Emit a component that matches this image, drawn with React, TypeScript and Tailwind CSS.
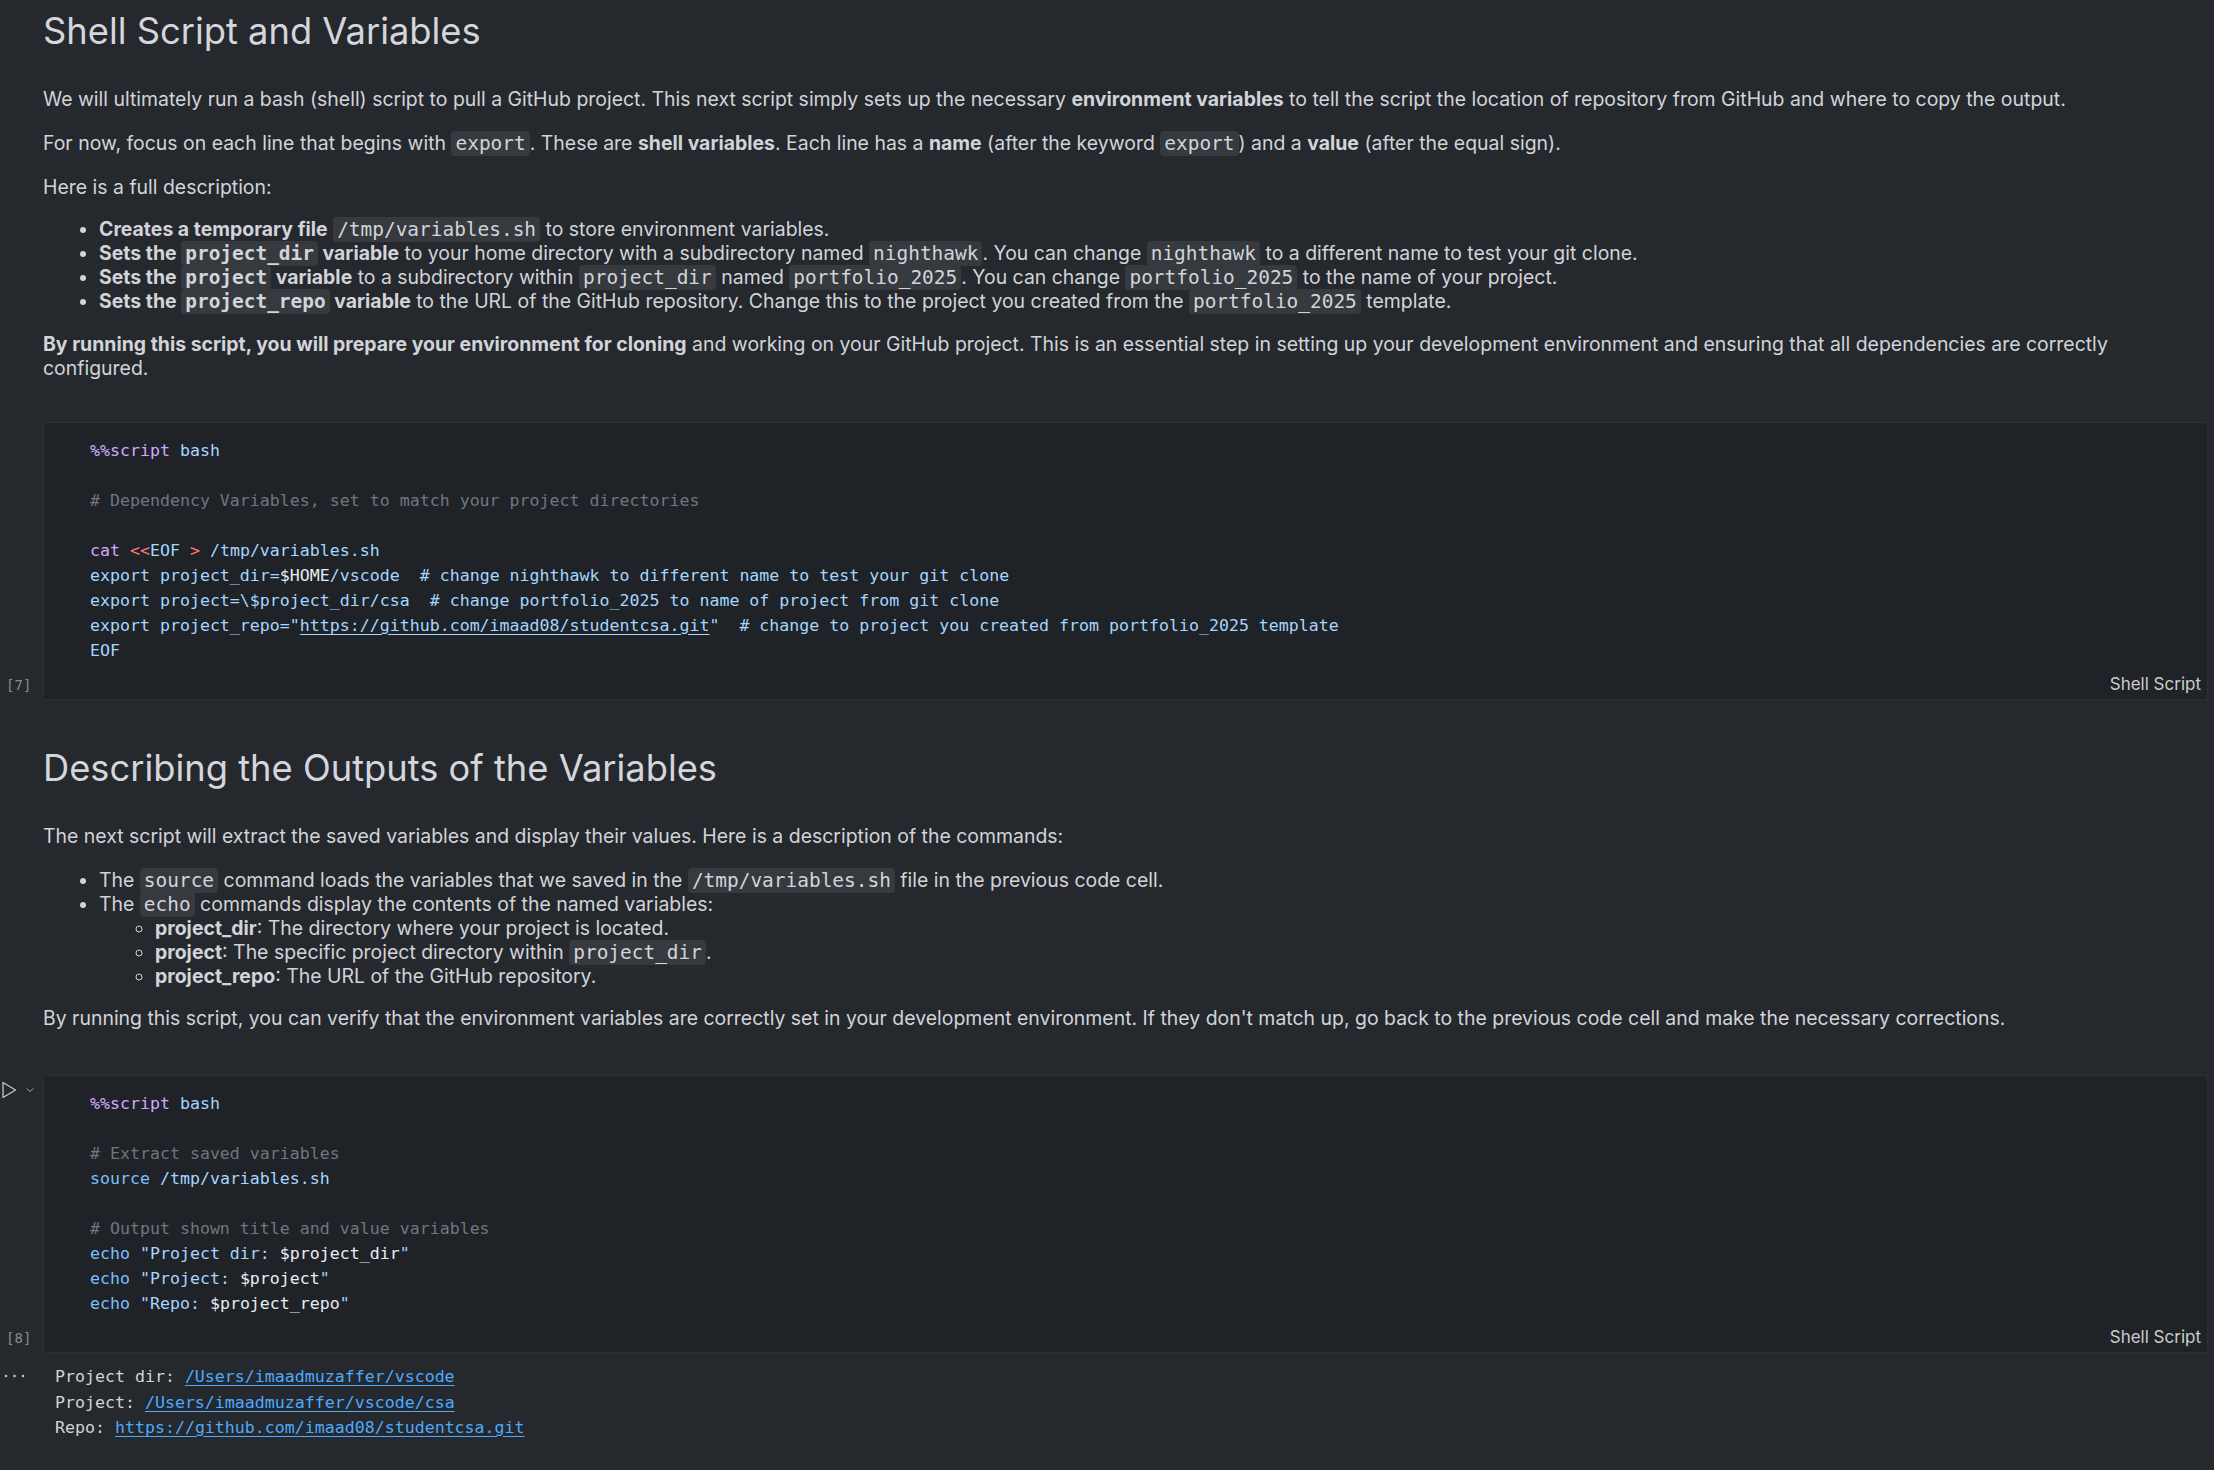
import React from "react";

const C = ({ children }: { children: React.ReactNode }) => (
  <code className="font-['DejaVu_Sans_Mono',monospace] text-[1em] leading-[16px] bg-[#363a3f] rounded-[4px] px-[4px] py-[1px]">
    {children}
  </code>
);

type Tok = [string, string];

const cell1: Tok[][] = [
  [["%%script", "text-[#d2a8ff]"], [" bash", "text-[#a5d6ff]"]],
  [],
  [["# Dependency Variables, set to match your project directories", "text-[#6e7681]"]],
  [],
  [["cat ", "text-[#d2a8ff]"], ["<<", "text-[#ff7b72]"], ["EOF", "text-[#a5d6ff]"], [" > ", "text-[#ff7b72]"], ["/tmp/variables.sh", "text-[#a5d6ff]"]],
  [["export project_dir=", "text-[#a5d6ff]"], ["$HOME", "text-[#e6edf3]"], ["/vscode  # change nighthawk to different name to test your git clone", "text-[#a5d6ff]"]],
  [["export project=\\$project_dir/csa  # change portfolio_2025 to name of project from git clone", "text-[#a5d6ff]"]],
  [["export project_repo=\"", "text-[#a5d6ff]"], ["https://github.com/imaad08/studentcsa.git", "text-[#a5d6ff] underline underline-offset-[3px]"], ["\"  # change to project you created from portfolio_2025 template", "text-[#a5d6ff]"]],
  [["EOF", "text-[#a5d6ff]"]],
];

const cell2: Tok[][] = [
  [["%%script", "text-[#d2a8ff]"], [" bash", "text-[#a5d6ff]"]],
  [],
  [["# Extract saved variables", "text-[#6e7681]"]],
  [["source", "text-[#79c0ff]"], [" /tmp/variables.sh", "text-[#a5d6ff]"]],
  [],
  [["# Output shown title and value variables", "text-[#6e7681]"]],
  [["echo", "text-[#79c0ff]"], [" \"Project dir: ", "text-[#a5d6ff]"], ["$project_dir", "text-[#e6edf3]"], ["\"", "text-[#a5d6ff]"]],
  [["echo", "text-[#79c0ff]"], [" \"Project: ", "text-[#a5d6ff]"], ["$project", "text-[#e6edf3]"], ["\"", "text-[#a5d6ff]"]],
  [["echo", "text-[#79c0ff]"], [" \"Repo: ", "text-[#a5d6ff]"], ["$project_repo", "text-[#e6edf3]"], ["\"", "text-[#a5d6ff]"]],
];

const CodeCell = ({ n, lines, run }: { n: number; lines: Tok[][]; run?: boolean }) => (
  <div className="flex">
    <div className="w-[43px] shrink-0 flex flex-col justify-between">
      <div className="flex items-start pt-[6px] pl-[2px] gap-[8px]">
        {run && (
          <>
            <svg width="15" height="18" viewBox="0 0 15 18" className="text-[#c5c5c5]">
              <path d="M1 1.5 L13.5 9 L1 16.5 Z" fill="none" stroke="currentColor" strokeWidth="1.3" strokeLinejoin="round" />
            </svg>
            <svg width="10" height="10" viewBox="0 0 10 10" className="mt-[4px] text-[#a0a0a0]">
              <path d="M1.5 3.5 L5 6.5 L8.5 3.5" fill="none" stroke="currentColor" strokeWidth="1" />
            </svg>
          </>
        )}
      </div>
      <div className="h-[30px] flex items-center pl-[6px] font-['DejaVu_Sans_Mono',monospace] text-[14px] text-[#8b8b8b]">
        [{n}]
      </div>
    </div>
    <div className="flex-1 mr-[6px] bg-[#1f2226] border border-[#2b2f34]">
      <div className="pt-[15px] pb-[6px] pl-[46px] font-['DejaVu_Sans_Mono',monospace] text-[16.6px] leading-[25px] whitespace-pre">
        {lines.map((l, i) => (
          <div key={i} className="h-[25px]">
            {l.map(([t, c], j) => (
              <span key={j} className={c}>
                {t}
              </span>
            ))}
          </div>
        ))}
      </div>
      <div className="h-[30px] flex items-center justify-end pr-[6px] text-[17px] text-[#cccccc]">Shell Script</div>
    </div>
  </div>
);

export default function App() {
  return (
    <div className="min-h-screen w-full bg-[#25282d] text-[#d1d4d9] font-['Inter','Liberation_Sans',sans-serif] text-[19.45px] leading-[24px]">
      <div className="pl-[43px] pr-[30px]">
        <h1 className="pt-[8px] text-[36.3px] leading-[47px] font-normal text-[#d3d6db]">Shell Script and Variables</h1>
        <p className="mt-[32px]">
          We will ultimately run a bash (shell) script to pull a GitHub project. This next script simply sets up the necessary{" "}
          <b>environment variables</b> to tell the script the location of repository from GitHub and where to copy the output.
        </p>
        <p className="mt-[20px]">
          For now, focus on each line that begins with <C>export</C>. These are <b>shell variables</b>. Each line has a{" "}
          <b>name</b> (after the keyword <C>export</C>) and a <b>value</b> (after the equal sign).
        </p>
        <p className="mt-[20px]">Here is a full description:</p>
        <ul className="mt-[18px] list-disc pl-[56px]">
          <li>
            <b>Creates a temporary file</b> <C>/tmp/variables.sh</C> to store environment variables.
          </li>
          <li>
            <b>
              Sets the <C>project_dir</C> variable
            </b>{" "}
            to your home directory with a subdirectory named <C>nighthawk</C>. You can change <C>nighthawk</C> to a different
            name to test your git clone.
          </li>
          <li>
            <b>
              Sets the <C>project</C> variable
            </b>{" "}
            to a subdirectory within <C>project_dir</C> named <C>portfolio_2025</C>. You can change <C>portfolio_2025</C> to the
            name of your project.
          </li>
          <li>
            <b>
              Sets the <C>project_repo</C> variable
            </b>{" "}
            to the URL of the GitHub repository. Change this to the project you created from the <C>portfolio_2025</C> template.
          </li>
        </ul>
        <p className="mt-[19px]">
          <b>By running this script, you will prepare your environment for cloning</b> and working on your GitHub project. This is
          an essential step in setting up your development environment and ensuring that all dependencies are correctly
          configured.
        </p>
      </div>

      <div className="mt-[42px]">
        <CodeCell n={7} lines={cell1} />
      </div>

      <div className="pl-[43px] pr-[30px]">
        <h1 className="mt-[45px] text-[36.3px] leading-[47px] font-normal text-[#d3d6db]">Describing the Outputs of the Variables</h1>
        <p className="mt-[32px]">
          The next script will extract the saved variables and display their values. Here is a description of the commands:
        </p>
        <ul className="mt-[20px] list-disc pl-[56px]">
          <li>
            The <C>source</C> command loads the variables that we saved in the <C>/tmp/variables.sh</C> file in the previous code
            cell.
          </li>
          <li>
            The <C>echo</C> commands display the contents of the named variables:
            <ul className="list-[circle] pl-[56px]">
              <li>
                <b>project_dir</b>: The directory where your project is located.
              </li>
              <li>
                <b>project</b>: The specific project directory within <C>project_dir</C>.
              </li>
              <li>
                <b>project_repo</b>: The URL of the GitHub repository.
              </li>
            </ul>
          </li>
        </ul>
        <p className="mt-[18px]">
          By running this script, you can verify that the environment variables are correctly set in your development
          environment. If they don't match up, go back to the previous code cell and make the necessary corrections.
        </p>
      </div>

      <div className="mt-[45px]">
        <CodeCell n={8} lines={cell2} run />
      </div>

      <div className="flex mt-[11px] pb-[30px]">
        <div className="w-[55px] shrink-0 pl-[4px] pt-[10px]">
          <svg width="22" height="4" viewBox="0 0 22 4" className="text-[#c5c5c5]">
            <circle cx="2" cy="2" r="1.3" fill="currentColor" />
            <circle cx="10.5" cy="2" r="1.3" fill="currentColor" />
            <circle cx="19" cy="2" r="1.3" fill="currentColor" />
          </svg>
        </div>
        <div className="font-['DejaVu_Sans_Mono',monospace] text-[16.6px] leading-[25.5px] text-[#d4d4d4] whitespace-pre">
          <div>
            Project dir: <span className="text-[#4daafc] underline underline-offset-[3px]">/Users/imaadmuzaffer/vscode</span>
          </div>
          <div>
            Project: <span className="text-[#4daafc] underline underline-offset-[3px]">/Users/imaadmuzaffer/vscode/csa</span>
          </div>
          <div>
            Repo: <span className="text-[#4daafc] underline underline-offset-[3px]">https://github.com/imaad08/studentcsa.git</span>
          </div>
        </div>
      </div>
    </div>
  );
}
